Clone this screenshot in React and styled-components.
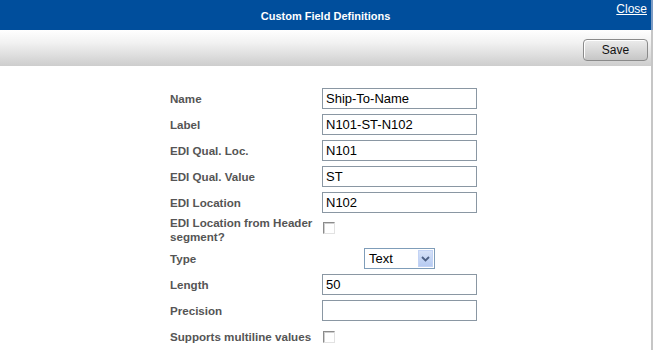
import React from 'react'
import styled, { createGlobalStyle } from 'styled-components'

const GlobalStyle = createGlobalStyle`
  body {
    margin: 0;
    background: #ffffff;
    font-family: "Liberation Sans", Arial, sans-serif;
  }
`

// * Page frame
const Frame = styled.div`
  display: flex;
  width: 653px;
  height: 350px;
  overflow: hidden;
`

const Main = styled.div`
  width: 651px;
  display: flex;
  flex-direction: column;
`

const Edge = styled.div`
  width: 2px;
  background: linear-gradient(to bottom, #7d9cc4 0, #7d9cc4 30px, #c6c6c6 30px);
`

// * Header
const Header = styled.div`
  height: 30px;
  background: #004e9c;
  display: grid;
  grid-template-columns: 1fr auto 1fr;
  align-items: center;
`

const Title = styled.div`
  grid-column: 2;
  color: #ffffff;
  font-size: 11px;
  font-weight: bold;
  padding-top: 1px;
`

const CloseLink = styled.a`
  justify-self: end;
  align-self: start;
  margin: 2px 4px 0 0;
  color: #ffffff;
  font-size: 12px;
  text-decoration: underline;
  cursor: pointer;
`

// * Toolbar
const Toolbar = styled.div`
  height: 36px;
  background: linear-gradient(to bottom, #ffffff 0%, #f2f2f2 35%, #cdcdcd 100%);
  display: flex;
  justify-content: flex-end;
  align-items: center;
  padding-right: 3px;
`

const SaveButton = styled.button`
  width: 65px;
  height: 22px;
  margin-top: 3px;
  border: 1px solid #8a8a8a;
  border-radius: 4px;
  background: linear-gradient(to bottom, #ececec 0%, #d9d9d9 50%, #c6c6c6 100%);
  box-shadow: inset 1px 1px 0 #ffffff;
  font-family: "Liberation Sans", Arial, sans-serif;
  font-size: 12px;
  color: #111111;
  padding: 0;
`

// * Form
const Form = styled.div`
  padding: 22px 0 0 170px;
  display: flex;
  flex-direction: column;
  gap: 5px;
`

const Row = styled.div`
  display: grid;
  grid-template-columns: 152px 155px;
  align-items: center;
  height: ${(props) => (props.tall ? '28px' : '21px')};
  margin: ${(props) => (props.tall ? '-2px 0 -1px' : '0')};
`

const Label = styled.div`
  color: #555555;
  font-size: 11.6px;
  font-weight: bold;
  line-height: 14px;
`

const TextInput = styled.input`
  box-sizing: border-box;
  width: 155px;
  height: 21px;
  border: 1px solid #8a97a3;
  padding: 0 0 0 3px;
  font-family: "Liberation Sans", Arial, sans-serif;
  font-size: 13px;
  color: #000000;
  outline: none;
`

const CheckBox = styled.span`
  display: block;
  width: 10px;
  height: 10px;
  margin: ${(props) => (props.offset ? '-5px 0 0 1px' : '0 0 0 1px')};
  border: 1px solid;
  border-color: #8c8c8c #e2e2e2 #e2e2e2 #8c8c8c;
  background: #ffffff;
  box-shadow: inset 1px 1px 0 #cfcfcf;
`

const SelectCell = styled.div`
  display: flex;
  justify-content: center;
`

const Select = styled.div`
  box-sizing: border-box;
  width: 71px;
  height: 21px;
  border: 1px solid #7f9db9;
  display: flex;
  align-items: center;
  justify-content: space-between;
  padding: 0 1px 0 4px;
  font-size: 13px;
  color: #000000;
`

const Arrow = styled.span`
  width: 15px;
  height: 17px;
  background: linear-gradient(to bottom, #d6e2f8 0%, #b7cbf2 100%);
  border: 1px solid #c3d3f5;
  box-sizing: border-box;
  display: flex;
  align-items: center;
  justify-content: center;
`

const fields = [
  { label: 'Name', value: 'Ship-To-Name' },
  { label: 'Label', value: 'N101-ST-N102' },
  { label: 'EDI Qual. Loc.', value: 'N101' },
  { label: 'EDI Qual. Value', value: 'ST' },
  { label: 'EDI Location', value: 'N102' },
]

export default function App() {
  return (
    <>
      <GlobalStyle />
      <Frame>
        <Main>
          <Header>
            <Title>Custom Field Definitions</Title>
            <CloseLink>Close</CloseLink>
          </Header>
          <Toolbar>
            <SaveButton>Save</SaveButton>
          </Toolbar>
          <Form>
            {fields.map((f) => (
              <Row key={f.label}>
                <Label>{f.label}</Label>
                <TextInput defaultValue={f.value} />
              </Row>
            ))}
            <Row tall>
              <Label>
                EDI Location from Header
                <br />
                segment?
              </Label>
              <CheckBox offset />
            </Row>
            <Row>
              <Label>Type</Label>
              <SelectCell>
                <Select>
                  <span>Text</span>
                  <Arrow>
                    <svg width="9" height="6" viewBox="0 0 9 6">
                      <path d="M1 1 L4.5 4.5 L8 1" fill="none" stroke="#4d6185" strokeWidth="1.8" />
                    </svg>
                  </Arrow>
                </Select>
              </SelectCell>
            </Row>
            <Row>
              <Label>Length</Label>
              <TextInput defaultValue="50" />
            </Row>
            <Row>
              <Label>Precision</Label>
              <TextInput defaultValue="" />
            </Row>
            <Row>
              <Label>Supports multiline values</Label>
              <CheckBox />
            </Row>
          </Form>
        </Main>
        <Edge />
      </Frame>
    </>
  )
}
